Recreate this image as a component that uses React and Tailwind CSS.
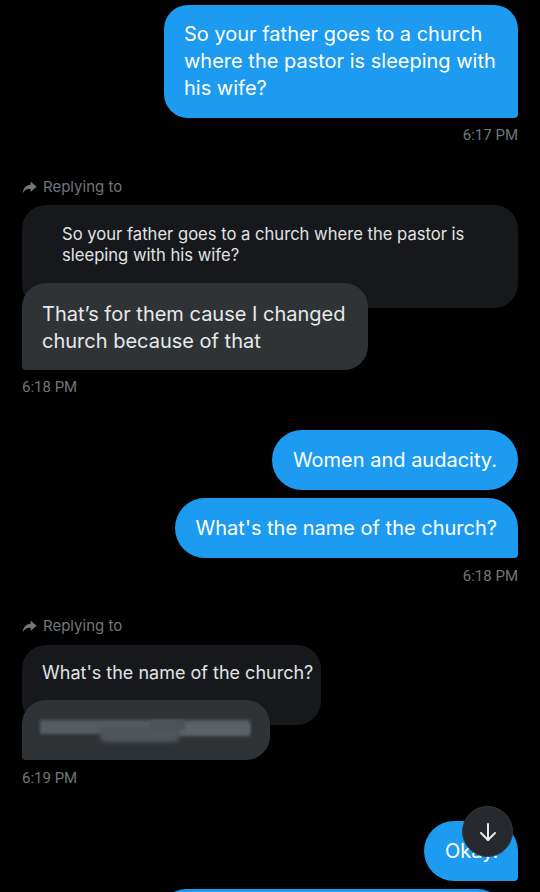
import React from "react";

function ReplyIcon() {
  return (
    <svg width="15" height="13" viewBox="0 0 15 13" className="shrink-0">
      <path d="M8.6 0.6 L14.6 5.8 L8.6 11 L8.6 7.8 C5 7.6 2.6 9 0.6 12.2 C1.2 7.2 3.8 4.3 8.6 3.8 Z" fill="#71767b" />
    </svg>
  );
}

function Stamp({ children }) {
  return (
    <div
      className="text-[15px] leading-[18px] text-[#71767b]"
      style={{ fontFamily: "Roboto, 'Liberation Sans', sans-serif" }}
    >
      {children}
    </div>
  );
}

function Replying({ className }) {
  return (
    <div className={`shrink-0 flex items-center gap-[6px] text-[15px] leading-[18px] text-[#71767b] ${className}`}>
      <ReplyIcon />
      <span>Replying to</span>
    </div>
  );
}

export default function App() {
  return (
    <div
      className="relative w-[540px] h-[892px] overflow-hidden bg-black flex flex-col px-[22px]"
      style={{ fontFamily: "Inter, 'Noto Sans', sans-serif" }}
    >
      {/* Message 1 */}
      <div className="shrink-0 mt-[5px] self-end w-[354px] bg-[#1d9bf0] rounded-[24px] rounded-br-[4px] pl-5 pr-3 pt-[16px] pb-[16px] text-white text-[20px] leading-[27px] whitespace-nowrap">
        So your father goes to a church
        <br />
        where the pastor is sleeping with
        <br />
        his wife?
      </div>
      <div className="shrink-0 mt-[8px] self-end">
        <Stamp>6:17 PM</Stamp>
      </div>

      {/* Reply 1 */}
      <Replying className="mt-[34px]" />
      <div className="shrink-0 mt-[9px] w-[496px] h-[103px] bg-[#16181c] rounded-[24px] pl-[40px] pt-[19px] text-[16.6px] leading-[21px] text-[#e1e3e4] whitespace-nowrap">
        So your father goes to a church where the pastor is
        <br />
        sleeping with his wife?
      </div>
      <div className="shrink-0 relative z-10 -mt-[25px] w-[346px] bg-[#2f3336] rounded-[24px] rounded-bl-[4px] pl-5 pt-[18px] pb-[15px] text-[20px] leading-[27px] text-[#e7e9ea] whitespace-nowrap">
        That’s for them cause I changed
        <br />
        church because of that
      </div>
      <div className="shrink-0 mt-[8px]">
        <Stamp>6:18 PM</Stamp>
      </div>

      {/* Sent 2 */}
      <div className="shrink-0 mt-[34px] self-end h-[60px] flex items-center bg-[#1d9bf0] rounded-[30px] px-[21px] text-white text-[20px] whitespace-nowrap">
        Women and audacity.
      </div>
      <div className="shrink-0 mt-[8px] self-end h-[60px] flex items-center bg-[#1d9bf0] rounded-[30px] rounded-br-[4px] px-[21px] text-white text-[20px] whitespace-nowrap">
        What's the name of the church?
      </div>
      <div className="shrink-0 mt-[9px] self-end">
        <Stamp>6:18 PM</Stamp>
      </div>

      {/* Reply 2 */}
      <Replying className="mt-[32px]" />
      <div className="shrink-0 mt-[10px] w-[299px] h-[80px] bg-[#16181c] rounded-[24px] pl-5 pt-[17px] text-[18px] leading-[21px] text-[#e1e3e4] whitespace-nowrap">
        What's the name of the church?
      </div>
      <div className="shrink-0 relative z-10 -mt-[25px] w-[248px] h-[60px] bg-[#2f3336] rounded-[24px] rounded-bl-[4px] pl-[18px] pt-[20px] overflow-hidden">
        <div className="relative w-[210px] h-[24px]">
          <div className="absolute left-0 top-0 w-[210px] h-[14px] bg-[#565c61] blur-[1.5px]" />
          <div className="absolute left-[60px] top-[6px] w-[80px] h-[16px] bg-[#50565b] rounded-b-[6px] blur-[2px]" />
          <div className="absolute left-[140px] top-[4px] w-[70px] h-[12px] bg-[#5c6267] blur-[1.5px]" />
          <div className="absolute left-[110px] top-0 w-[35px] h-[10px] bg-[#4d5358] blur-[1px]" />
        </div>
      </div>
      <div className="shrink-0 mt-[9px]">
        <Stamp>6:19 PM</Stamp>
      </div>

      {/* Sent 3 */}
      <div className="shrink-0 mt-[34px] self-end w-[94px] h-[60px] flex items-center bg-[#1d9bf0] rounded-[30px] rounded-br-[4px] pl-[21px] text-white text-[20px] whitespace-nowrap overflow-hidden">
        Okay.
      </div>
      <div className="shrink-0 mt-[8px] ml-[135px] w-[350px] h-[60px] bg-[#1d9bf0] rounded-[30px]" />

      {/* Scroll-down button */}
      <div className="absolute left-[462px] top-[806px] w-[51px] h-[51px] rounded-full bg-[#26292d] border border-[#35393d] flex items-center justify-center z-20">
        <svg width="24" height="24" viewBox="0 0 24 24" fill="none" stroke="#e7e9ea" strokeWidth="2" strokeLinecap="round" strokeLinejoin="round">
          <path d="M12 4 V20" />
          <path d="M5 13 L12 20 L19 13" />
        </svg>
      </div>
    </div>
  );
}
